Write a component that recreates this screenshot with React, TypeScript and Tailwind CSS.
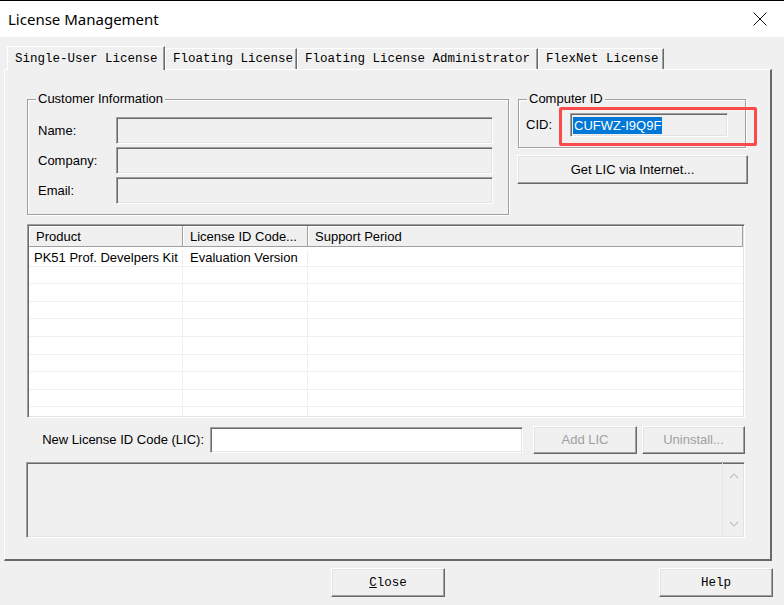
import React from "react"

// classic Win32 3D edges
const sunken =
  "border border-t-[#a0a0a0] border-l-[#a0a0a0] border-r-white border-b-white shadow-[inset_1px_1px_0_#696969,inset_-1px_-1px_0_#e3e3e3]"
const raised =
  "border border-t-white border-l-white border-r-[#696969] border-b-[#696969] shadow-[inset_-1px_-1px_0_#a0a0a0,inset_1px_1px_0_#e3e3e3]"
const etched = "border border-[#a0a0a0] shadow-[inset_1px_1px_0_#fff,1px_1px_0_#fff]"

const sans = "font-['Liberation_Sans',Arial,sans-serif] text-[13px]"
const mono = "font-['Liberation_Mono','Courier_New',monospace] text-[12.5px] text-black"

const tabs = [
  { label: "Single-User License", w: "w-[158px]", active: true },
  { label: "Floating License", w: "w-[132px]", active: false },
  { label: "Floating License Administrator", w: "w-[241px]", active: false },
  { label: "FlexNet License", w: "w-[126px]", active: false },
]

const rows = [
  ["PK51 Prof. Develpers Kit", "Evaluation Version", ""],
  ["", "", ""],
  ["", "", ""],
  ["", "", ""],
  ["", "", ""],
  ["", "", ""],
  ["", "", ""],
  ["", "", ""],
  ["", "", ""],
  ["", "", ""],
]

function GroupBox({ title, className, children }: { title: string; className: string; children: React.ReactNode }) {
  return (
    <div className={`relative ${etched} ${className}`}>
      <span className={`absolute -top-[9px] left-[8px] bg-[#f0f0f0] px-[2px] leading-[16px] text-black ${sans}`}>{title}</span>
      {children}
    </div>
  )
}

function Field({ label }: { label: string }) {
  return (
    <div className="flex items-center h-[27px]">
      <span className={`w-[88px] pl-[10px] text-black ${sans}`}>{label}</span>
      <div className={`w-[377px] h-full bg-[#f0f0f0] ${sunken}`} />
    </div>
  )
}

export default function App() {
  return (
    <div className="w-[784px] h-[605px] bg-[#f0f0f0] flex flex-col overflow-hidden select-none">
      {/* title bar */}
      <div className="h-[37px] border-t border-black bg-white flex items-center justify-between pl-[8px] pr-[17px]">
        <span className="font-['Noto_Sans',sans-serif] text-[15px] text-black">License Management</span>
        <svg width="14" height="14" viewBox="0 0 14 14">
          <path d="M0.5 0.5 L13.5 13.5 M13.5 0.5 L0.5 13.5" stroke="#111" strokeWidth="1" fill="none" />
        </svg>
      </div>

      {/* tab strip */}
      <div className="flex items-end pl-[7px] pt-[9px]">
        {tabs.map((t) =>
          t.active ? (
            <div
              key={t.label}
              className={`${t.w} h-[24px] -mb-px relative z-10 bg-[#f0f0f0] border-l border-t border-white border-r border-r-[#696969] shadow-[inset_-1px_0_0_#a0a0a0] pl-[7px] pt-[1px] flex items-center ${mono}`}
            >
              {t.label}
            </div>
          ) : (
            <div
              key={t.label}
              className={`${t.w} h-[21px] border-l border-t border-white border-r border-r-[#696969] shadow-[inset_-1px_0_0_#a0a0a0] pl-[7px] pt-[1px] flex items-center ${mono}`}
            >
              {t.label}
            </div>
          )
        )}
      </div>

      {/* tab page */}
      <div className="ml-[4px] w-[768px] h-[492px] border-l border-t border-white border-r-2 border-b-2 border-r-[#696969] border-b-[#696969] flex flex-col pl-[22px] pt-[29px]">
        <div className="flex">
          <GroupBox title="Customer Information" className="w-[482px] h-[116px] flex flex-col gap-[3px] pt-[17px]">
            <Field label="Name:" />
            <Field label="Company:" />
            <Field label="Email:" />
          </GroupBox>

          <div className="ml-[8px] w-[231px] flex flex-col">
            <GroupBox title="Computer ID" className="ml-[1px] w-[228px] h-[49px] pt-[13px]">
              <div className="flex items-center">
                <span className={`w-[51px] pl-[7px] text-black ${sans}`}>CID:</span>
                <div className={`w-[158px] h-[24px] bg-[#f0f0f0] pl-[2px] flex items-center ${sunken}`}>
                  <span className={`bg-[#0078d7] px-[1px] leading-[17px] text-white ${sans}`}>CUFWZ-I9Q9F</span>
                </div>
              </div>
              {/* highlight marker around the CID */}
              <div className="absolute left-[40px] top-[7px] w-[198px] h-[39px] border-[3px] border-[#fb4a4a] rounded-[2px]" />
            </GroupBox>
            <button className={`mt-[7px] h-[29px] bg-[#f0f0f0] text-black ${raised} ${sans}`}>Get LIC via Internet...</button>
          </div>
        </div>

        {/* product list */}
        <div className={`mt-[9px] w-[718px] h-[194px] bg-white p-px flex flex-col ${sunken}`}>
          <div className={`flex h-[21px] shrink-0 text-black ${sans}`}>
            <div className="w-[154px] pl-[7px] pt-[2px] flex items-center bg-[#f0f0f0] border-r border-b border-[#a0a0a0] shadow-[inset_1px_1px_0_#fff]">Product</div>
            <div className="w-[125px] pl-[7px] pt-[2px] flex items-center bg-[#f0f0f0] border-r border-b border-[#a0a0a0] shadow-[inset_1px_1px_0_#fff]">License ID Code...</div>
            <div className="flex-1 pl-[7px] pt-[2px] flex items-center bg-[#f0f0f0] border-r border-b border-[#a0a0a0] shadow-[inset_1px_1px_0_#fff]">Support Period</div>
          </div>
          <div className="flex-1 overflow-hidden">
            {rows.map((r, i) => (
              <div key={i} className={`flex border-b border-[#f0f0f0] text-black ${i === 0 ? "h-[19.7px] pt-[3px]" : "h-[17.6px]"} ${sans}`}>
                <div className="w-[154px] pl-[5px] border-r border-[#f0f0f0] flex items-center whitespace-nowrap">{r[0]}</div>
                <div className="w-[125px] pl-[7px] border-r border-[#f0f0f0] flex items-center whitespace-nowrap">{r[1]}</div>
                <div className="flex-1 pl-[7px] flex items-center">{r[2]}</div>
              </div>
            ))}
          </div>
        </div>

        {/* new LIC entry */}
        <div className="mt-[8px] flex items-center h-[28px]">
          <span className={`w-[177px] text-right text-black ${sans}`}>New License ID Code (LIC):</span>
          <div className={`ml-[6px] w-[313px] h-[26px] bg-white ${sunken}`} />
          <button className={`ml-[10px] w-[104px] h-[28px] bg-[#f0f0f0] text-[#a0a0a0] ${raised} ${sans}`}>Add LIC</button>
          <button className={`ml-[5px] w-[103px] h-[28px] bg-[#f0f0f0] text-[#a0a0a0] ${raised} ${sans}`}>Uninstall...</button>
        </div>

        {/* status output */}
        <div className={`mt-[8px] -ml-px w-[719px] h-[76px] bg-[#f0f0f0] flex justify-end ${sunken}`}>
          <div className="w-[22px] h-full border-l border-[#e6e6e6] flex flex-col items-center justify-between py-[10px]">
            <svg width="10" height="6" viewBox="0 0 10 6">
              <path d="M1 5 L5 1 L9 5" stroke="#c2c2c2" strokeWidth="1.2" fill="none" />
            </svg>
            <svg width="10" height="6" viewBox="0 0 10 6">
              <path d="M1 1 L5 5 L9 1" stroke="#c2c2c2" strokeWidth="1.2" fill="none" />
            </svg>
          </div>
        </div>
      </div>

      {/* dialog buttons */}
      <div className="mt-[7px] flex justify-between pl-[331px] pr-[11px]">
        <button className={`w-[114px] h-[29px] bg-[#f0f0f0] pt-[2px] ${raised} ${mono}`}>
          <span className="underline">C</span>lose
        </button>
        <button className={`w-[114px] h-[29px] bg-[#f0f0f0] pt-[2px] ${raised} ${mono}`}>Help</button>
      </div>
    </div>
  )
}
